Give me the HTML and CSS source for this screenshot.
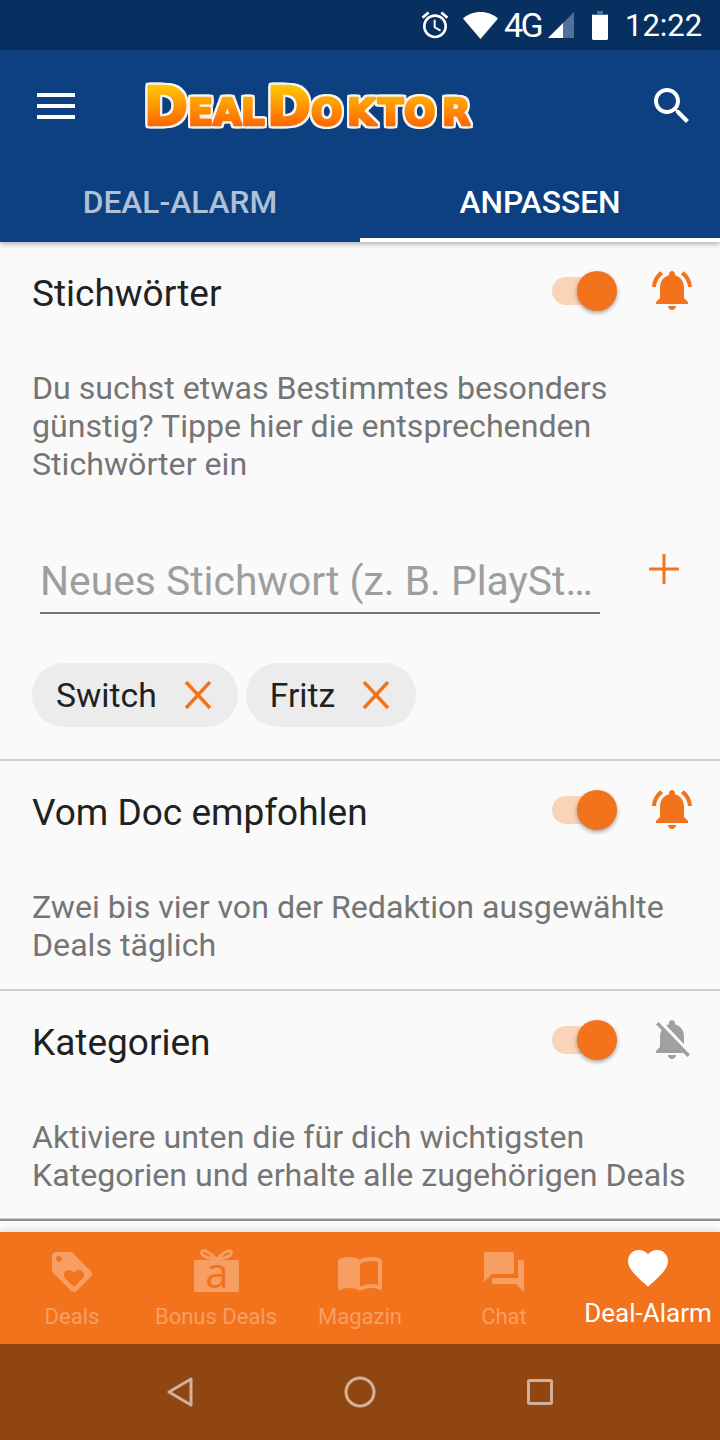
FILE: index.html
```html
<!DOCTYPE html>
<html lang="de">
<head>
    <meta charset="UTF-8">
    <meta name="viewport" content="width=device-width, initial-scale=1.0">
    <title>DealDoktor Deal-Alarm</title>
    <link rel="stylesheet" href="styles.css">
</head>
<body>
    <div class="page">
        <!-- Statusleiste -->
        <div class="statusbar">
            <svg class="st-alarm" viewBox="0 0 24 24"><path d="M22 5.72l-4.6-3.86-1.29 1.53 4.6 3.86L22 5.72zM7.88 3.39L6.6 1.86 2 5.71l1.29 1.53 4.59-3.85zM12.5 8H11v6l4.75 2.85.75-1.23-4-2.37V8zM12 4c-4.97 0-9 4.03-9 9s4.03 9 9 9c4.97 0 9-4.03 9-9s-4.03-9-9-9zm0 16c-3.87 0-7-3.13-7-7s3.13-7 7-7 7 3.13 7 7-3.13 7-7 7z"/></svg>
            <svg class="st-wifi" viewBox="0 0 35 27"><path d="M17.5 27L0 6.5C4.5 2.5 10.5 0 17.5 0S30.5 2.5 35 6.5z"/></svg>
            <span class="st-net">4G</span>
            <svg class="st-signal" viewBox="0 0 26 26"><path class="dim" d="M26 0v26H15V11z"/><path d="M0 26L15 11v15z"/></svg>
            <svg class="st-battery" viewBox="0 0 16 29"><path class="dim" d="M5 0h6v3h5v3H0V3h5z"/><path d="M0 4h16v24l-1 1H1l-1-1z"/></svg>
            <span class="st-time">12:22</span>
        </div>

        <header class="appbar">
            <div class="toolbar">
                <svg class="menu-icon" viewBox="0 0 38 26"><path d="M0 0h38v4H0zM0 11h38v4H0zM0 22h38v4H0z"/></svg>
                <svg class="logo" viewBox="0 0 330 48" role="img" aria-label="DealDoktor">
                    <defs>
                        <linearGradient id="logoFill" gradientUnits="userSpaceOnUse" x1="0" y1="3" x2="0" y2="45">
                            <stop offset="0" stop-color="#ffc800"/>
                            <stop offset="1" stop-color="#ff6400"/>
                        </linearGradient>
                    </defs>
                    <text class="logo-text" y="43"><tspan class="big" x="0">D</tspan><tspan x="44">E</tspan><tspan x="69">A</tspan><tspan x="97">L</tspan><tspan class="big" x="123">D</tspan><tspan x="167">O</tspan><tspan x="203">K</tspan><tspan x="234">T</tspan><tspan x="260">O</tspan><tspan x="298">R</tspan></text>
                </svg>
                <svg class="search-icon" viewBox="0 0 24 24"><path d="M15.5 14h-.79l-.28-.27C15.41 12.59 16 11.11 16 9.5 16 5.91 13.09 3 9.5 3S3 5.91 3 9.5 5.91 16 9.5 16c1.61 0 3.09-.59 4.23-1.57l.27.28v.79l5 4.99L20.49 19l-4.99-5zm-6 0C7.01 14 5 11.99 5 9.5S7.01 5 9.5 5 14 7.01 14 9.5 11.99 14 9.5 14z"/></svg>
            </div>
            <div class="tabs">
                <div class="tab">DEAL-ALARM</div>
                <div class="tab active">ANPASSEN</div>
            </div>
        </header>

        <main class="content">
            <section class="block">
                <div class="block-head">
                    <h2>Stichwörter</h2>
                    <div class="switch"><span class="thumb"></span></div>
                    <svg class="bell" viewBox="0 0 24 24"><path d="M7.58 4.08L6.15 2.65C3.75 4.48 2.17 7.3 2.03 10.5h2c.15-2.65 1.51-4.97 3.55-6.42zm12.39 6.42h2c-.15-3.2-1.73-6.02-4.12-7.85l-1.42 1.43c2.02 1.45 3.39 3.77 3.54 6.42zM18 11c0-3.07-1.64-5.64-4.5-6.32V4c0-.83-.67-1.5-1.5-1.5s-1.5.67-1.5 1.5v.68C7.63 5.36 6 7.92 6 11v5l-2 2v1h16v-1l-2-2v-5zm-6 11c.14 0 .27-.01.4-.04.65-.14 1.18-.58 1.44-1.18.1-.24.15-.5.15-.78h-4c.01 1.1.9 2 2.01 2z"/></svg>
                </div>
                <p class="desc">Du suchst etwas Bestimmtes besonders günstig? Tippe hier die entsprechenden Stichwörter ein</p>
                <div class="add-row">
                    <input class="keyword" type="text" placeholder="Neues Stichwort (z. B. PlayStation 4)">
                    <svg class="plus" viewBox="0 0 30 30"><path d="M13.5 0h3v13.5H30v3H16.5V30h-3V16.5H0v-3h13.5z"/></svg>
                </div>
                <div class="chips">
                    <div class="chip">Switch <svg viewBox="0 0 28 28"><path d="M2 1l12 13L26 1M2 27l12-13 12 13"/></svg></div>
                    <div class="chip">Fritz <svg viewBox="0 0 28 28"><path d="M2 1l12 13L26 1M2 27l12-13 12 13"/></svg></div>
                </div>
            </section>

            <section class="block">
                <div class="block-head">
                    <h2>Vom Doc empfohlen</h2>
                    <div class="switch"><span class="thumb"></span></div>
                    <svg class="bell" viewBox="0 0 24 24"><path d="M7.58 4.08L6.15 2.65C3.75 4.48 2.17 7.3 2.03 10.5h2c.15-2.65 1.51-4.97 3.55-6.42zm12.39 6.42h2c-.15-3.2-1.73-6.02-4.12-7.85l-1.42 1.43c2.02 1.45 3.39 3.77 3.54 6.42zM18 11c0-3.07-1.64-5.64-4.5-6.32V4c0-.83-.67-1.5-1.5-1.5s-1.5.67-1.5 1.5v.68C7.63 5.36 6 7.92 6 11v5l-2 2v1h16v-1l-2-2v-5zm-6 11c.14 0 .27-.01.4-.04.65-.14 1.18-.58 1.44-1.18.1-.24.15-.5.15-.78h-4c.01 1.1.9 2 2.01 2z"/></svg>
                </div>
                <p class="desc">Zwei bis vier von der Redaktion ausgewählte Deals täglich</p>
            </section>

            <section class="block last">
                <div class="block-head">
                    <h2>Kategorien</h2>
                    <div class="switch"><span class="thumb"></span></div>
                    <svg class="bell off" viewBox="0 0 24 24"><path d="M20 18.69L7.84 6.14 5.27 3.49 4 4.76l2.8 2.8v.01c-.52.99-.8 2.16-.8 3.42v5l-2 2v1h13.73l2 2L21 19.72l-1-1.03zM12 22c1.11 0 2-.89 2-2h-4c0 1.11.89 2 2 2zm6-7.32V11c0-3.08-1.64-5.64-4.5-6.32V4c0-.83-.67-1.5-1.5-1.5s-1.5.67-1.5 1.5v.68c-.15.03-.29.08-.42.12-.1.03-.2.07-.3.11h-.01c-.2.08-.4.17-.59.27-.01 0-.01 0-.02.01L18 14.68z"/></svg>
                </div>
                <p class="desc">Aktiviere unten die für dich wichtigsten Kategorien und erhalte alle zugehörigen Deals</p>
            </section>
        </main>

        <nav class="bottomnav">
            <a class="nav-item">
                <svg viewBox="0 0 24 24"><path d="M21.41 11.58l-9-9C12.05 2.22 11.55 2 11 2H4c-1.1 0-2 .9-2 2v7c0 .55.22 1.05.59 1.42l9 9c.36.36.86.58 1.41.58.55 0 1.05-.22 1.41-.59l7-7c.37-.36.59-.86.59-1.41 0-.55-.23-1.06-.59-1.42zM5.5 7C4.67 7 4 6.33 4 5.5S4.67 4 5.5 4 7 4.67 7 5.5 6.33 7 5.5 7zm11.77 8.27L13 19.54l-4.27-4.27C8.28 14.81 8 14.19 8 13.5c0-1.38 1.12-2.5 2.5-2.5.69 0 1.32.28 1.77.74l.73.72.73-.73c.45-.45 1.08-.73 1.77-.73 1.38 0 2.5 1.12 2.5 2.5 0 .69-.28 1.32-.73 1.77z"/></svg>
                <span>Deals</span>
            </a>
            <a class="nav-item">
                <svg class="gift" viewBox="0 0 48 48">
                    <rect x="2" y="12" width="45" height="32" rx="2"/>
                    <path class="bow" d="M24 11C20 7 14 2 11 3c-3 1-1 5 3 6 3 1 7 2 10 2zM25 11c4-4 10-9 13-8 3 1 1 5-3 6-3 1-7 2-10 2z"/>
                    <text class="gift-a" x="25" y="40">a</text>
                </svg>
                <span>Bonus Deals</span>
            </a>
            <a class="nav-item">
                <svg viewBox="0 0 24 24"><path d="M21 5c-1.11-.35-2.33-.5-3.5-.5-1.95 0-4.05.4-5.5 1.5-1.45-1.1-3.55-1.5-5.5-1.5S2.45 4.9 1 6v14.65c0 .25.25.5.5.5.1 0 .15-.05.25-.05C3.1 20.45 5.05 20 6.5 20c1.95 0 4.05.4 5.5 1.5 1.35-.85 3.8-1.5 5.5-1.5 1.65 0 3.35.3 4.75 1.05.1.05.15.05.25.05.25 0 .5-.25.5-.5V6c-.6-.45-1.25-.75-2-1zm0 13.5c-1.1-.35-2.3-.5-3.5-.5-1.7 0-4.15.65-5.5 1.5V8c1.35-.85 3.8-1.5 5.5-1.5 1.2 0 2.4.15 3.5.5v11.5z"/></svg>
                <span>Magazin</span>
            </a>
            <a class="nav-item">
                <svg viewBox="0 0 24 24"><path d="M21 6h-2v9H6v2c0 .55.45 1 1 1h11l4 4V7c0-.55-.45-1-1-1zm-4 6V3c0-.55-.45-1-1-1H3c-.55 0-1 .45-1 1v14l4-4h10c.55 0 1-.45 1-1z"/></svg>
                <span>Chat</span>
            </a>
            <a class="nav-item active">
                <svg viewBox="0 0 24 24"><path d="M12 21.35l-1.45-1.32C5.4 15.36 2 12.28 2 8.5 2 5.42 4.42 3 7.5 3c1.74 0 3.41.81 4.5 2.09C13.09 3.81 14.76 3 16.5 3 19.58 3 22 5.42 22 8.5c0 3.78-3.4 6.86-8.55 11.54L12 21.35z"/></svg>
                <span>Deal-Alarm</span>
            </a>
        </nav>

        <!-- Android Navigation -->
        <div class="sysnav">
            <svg class="sys-back" viewBox="0 0 26 30"><path d="M24 2v26L2 15z"/></svg>
            <svg class="sys-home" viewBox="0 0 32 32"><circle cx="16" cy="16" r="14"/></svg>
            <svg class="sys-recent" viewBox="0 0 26 26"><rect x="1.5" y="1.5" width="23" height="23" rx="1"/></svg>
        </div>
    </div>
</body>
</html>
```

FILE: styles.css
```css
* {
    box-sizing: border-box;
}

body {
    margin: 0;
    font-family: Roboto, sans-serif;
    background-color: #fafafa;
    color: #212121;
}

svg {
    display: block;
    flex-shrink: 0;
}

.page {
    display: flex;
    flex-direction: column;
    width: 720px;
    height: 1440px;
    overflow: hidden;
}

/* Statusleiste */
.statusbar {
    display: flex;
    align-items: center;
    height: 50px;
    padding-right: 16px;
    justify-content: flex-end;
    background-color: #072f5f;
    color: #fff;
    fill: #fff;
}

.statusbar .dim {
    fill: #50719a;
}

.st-alarm {
    width: 32px;
    height: 32px;
}

.st-wifi {
    width: 35px;
    height: 27px;
    margin-left: 12px;
}

.st-net {
    margin-left: 6px;
    font-size: 34px;
    letter-spacing: -2.5px;
    width: 38px;
}

.st-signal {
    width: 26px;
    height: 26px;
    margin-left: 6px;
}

.st-battery {
    width: 16px;
    height: 29px;
    margin-left: 18px;
}

.st-time {
    margin-left: 17px;
    font-size: 31px;
    width: 79px;
}

/* Kopfbereich */
.appbar {
    background-color: #0d4080;
    box-shadow: 0 2px 5px rgba(0, 0, 0, 0.3);
    position: relative;
    z-index: 2;
}

.toolbar {
    display: flex;
    align-items: center;
    height: 112px;
    fill: #fff;
}

.menu-icon {
    width: 38px;
    height: 26px;
    margin-left: 37px;
}

.logo {
    width: 330px;
    height: 48px;
    margin-left: 69px;
    overflow: visible;
    filter: drop-shadow(2px 0 0 #f4f4f4) drop-shadow(-2px 0 0 #f4f4f4) drop-shadow(0 2px 0 #f4f4f4) drop-shadow(0 -2px 0 #f4f4f4);
}

.logo-text {
    font-family: "DejaVu Sans", sans-serif;
    font-weight: bold;
    font-size: 37px;
    fill: url(#logoFill);
    stroke: url(#logoFill);
    stroke-width: 2.5px;
    stroke-linejoin: round;
}

.logo-text .big {
    font-size: 53px;
}

.search-icon {
    width: 48px;
    height: 48px;
    margin-left: auto;
    margin-right: 24px;
}

.tabs {
    display: flex;
    height: 80px;
}

.tab {
    flex: 1;
    display: flex;
    align-items: center;
    justify-content: center;
    padding-top: 5px;
    font-size: 31.7px;
    font-weight: 500;
    color: #b0c0d6;
    border-bottom: 4px solid transparent;
}

.tab.active {
    color: #fff;
    border-bottom-color: #fff;
}

/* Inhalt */
.content {
    flex: 1;
    overflow: hidden;
}

.block {
    border-bottom: 2px solid #cfcfcf;
}

.block.last {
    border-bottom: 2px solid #8c8c8c;
    box-shadow: 0 -1px 0 #cfcfcf inset;
}

.block-head {
    display: flex;
    align-items: center;
    height: 102px;
    padding-left: 32px;
}

.block-head h2 {
    margin: 0;
    flex: 1;
    font-size: 37px;
    font-weight: 400;
    color: #212121;
}

.switch {
    position: relative;
    width: 60px;
    height: 28px;
    margin-top: -4px;
    border-radius: 14px;
    background-color: #fbd3b9;
}

.thumb {
    position: absolute;
    left: 25px;
    top: -6px;
    width: 40px;
    height: 40px;
    border-radius: 50%;
    background-color: #f2731c;
    box-shadow: 0 2px 4px rgba(0, 0, 0, 0.35);
}

.bell {
    width: 48px;
    height: 48px;
    margin-top: -6px;
    margin-left: 36px;
    margin-right: 24px;
    fill: #f2731c;
}

.bell.off {
    fill: #a0a0a0;
}

.desc {
    margin: 25px 32px;
    font-size: 32.15px;
    line-height: 38px;
    color: #757575;
}

.add-row {
    display: flex;
    align-items: flex-start;
    margin-top: 72px;
    padding-left: 40px;
}

.keyword {
    width: 560px;
    height: 59px;
    padding: 0 0 5px;
    border: none;
    border-bottom: 2px solid #757575;
    border-radius: 0;
    outline: none;
    background: none;
    font-family: Roboto, sans-serif;
    font-size: 40.8px;
    text-overflow: ellipsis;
    color: #212121;
}

.keyword::placeholder {
    color: #9e9e9e;
    opacity: 1;
}

.plus {
    width: 30px;
    height: 30px;
    margin-left: 49px;
    margin-top: -1px;
    fill: #f2731c;
}

.chips {
    display: flex;
    gap: 8px;
    margin-top: 49px;
    padding: 0 32px 32px;
}

.chip {
    display: flex;
    align-items: center;
    justify-content: space-between;
    height: 64px;
    padding: 0 26px 0 24px;
    gap: 27px;
    border-radius: 32px;
    background-color: #ececec;
    font-size: 33.7px;
    color: #212121;
}

.chip svg {
    width: 28px;
    height: 28px;
    fill: none;
    stroke: #f2731c;
    stroke-width: 3.5px;
}

/* Untere Navigation */
.bottomnav {
    display: flex;
    height: 112px;
    background-color: #f2731c;
    box-shadow: 0 -2px 6px rgba(0, 0, 0, 0.1);
    position: relative;
}

.nav-item {
    flex: 1;
    display: flex;
    flex-direction: column;
    align-items: center;
    padding-top: 16px;
    font-size: 22px;
    line-height: 41px;
    white-space: nowrap;
    color: #f79e63;
    fill: #f79e63;
}

.nav-item svg {
    width: 48px;
    height: 48px;
}

.nav-item .gift {
    overflow: visible;
}

.nav-item .bow {
    fill: none;
    stroke: #f79e63;
    stroke-width: 3px;
}

.gift-a {
    font-family: "Open Sans", sans-serif;
    font-size: 42px;
    text-anchor: middle;
    fill: #f2731c;
}

.nav-item.active {
    padding-top: 12px;
    font-size: 26px;
    line-height: 42px;
    color: #fff;
    fill: #fff;
}

.sysnav {
    display: flex;
    align-items: center;
    justify-content: space-between;
    height: 96px;
    padding: 0 167px;
    background-color: #904611;
    fill: none;
    stroke: #d3b09a;
    stroke-width: 3px;
    stroke-linejoin: round;
}

.sys-back {
    width: 26px;
    height: 30px;
}

.sys-home {
    width: 32px;
    height: 32px;
}

.sys-recent {
    width: 26px;
    height: 26px;
}
```
